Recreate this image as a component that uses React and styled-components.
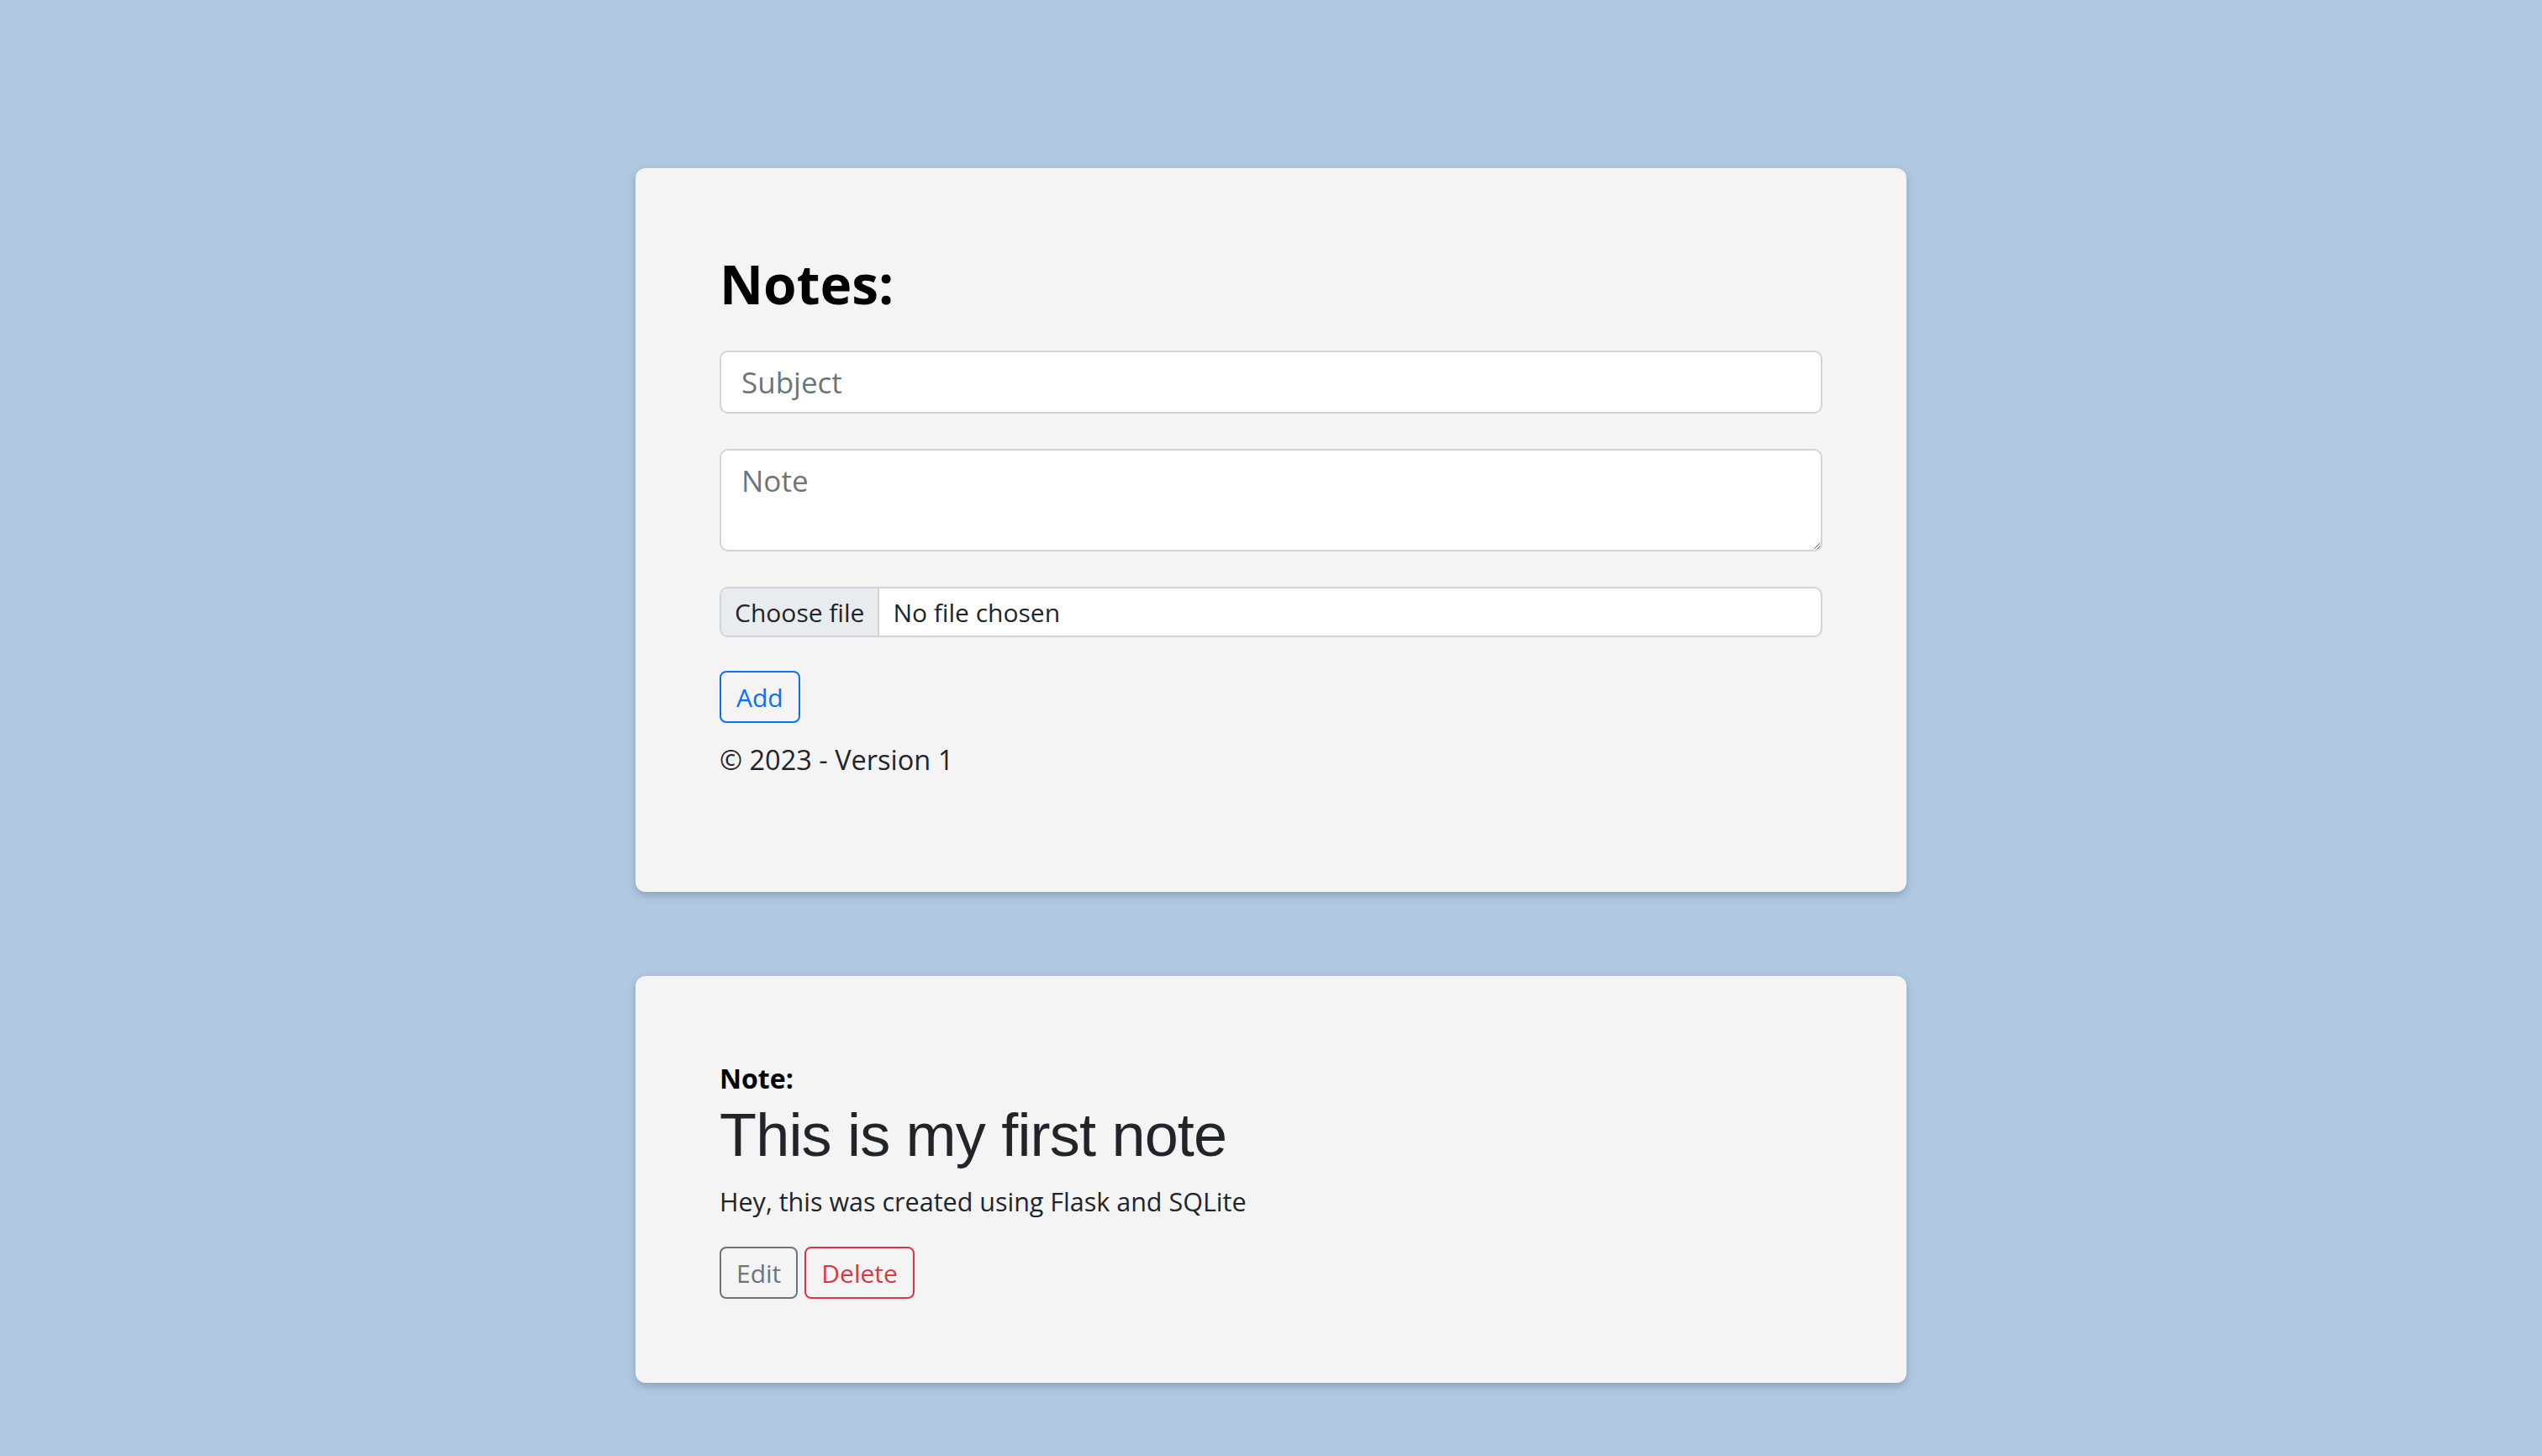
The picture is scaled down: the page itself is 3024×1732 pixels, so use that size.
import React from "react";
import styled, { createGlobalStyle } from "styled-components";

const GlobalStyle = createGlobalStyle`
  html, body {
    margin: 0;
    padding: 0;
    background: #b0c9e0;
  }
  body {
    font-family: "Open Sans", "Noto Sans", sans-serif;
    color: #212529;
  }
  * { box-sizing: border-box; }
`;

const Page = styled.main`
  display: flex;
  flex-direction: column;
  align-items: center;
  gap: 100px;
  padding: 200px 0 87px;
  min-height: 1732px;
`;

const Card = styled.section`
  width: 1512px;
  background: #f4f4f4;
  border-radius: 12px;
  box-shadow: 0 4px 10px rgba(40, 60, 90, 0.28);
  display: flex;
  flex-direction: column;
  padding: ${(p) => p.$pad};
`;

const Heading = styled.h1`
  margin: 0;
  font-size: 64px;
  line-height: 80px;
  font-weight: 700;
  color: #000;
`;

const Form = styled.form`
  display: flex;
  flex-direction: column;
  margin-top: 39px;
`;

const TextInput = styled.input`
  height: 75px;
  border: 2px solid #ced4da;
  border-radius: 10px;
  background: #fff;
  padding: 0 24px;
  font-family: "Open Sans", sans-serif;
  font-size: 35px;
  color: #212529;
  outline: none;
  &::placeholder { color: #6c757d; }
`;

const TextArea = styled.textarea`
  height: 122px;
  margin-top: 42px;
  border: 2px solid #ced4da;
  border-radius: 10px;
  background: #fff;
  padding: 12px 24px;
  font-family: "Open Sans", sans-serif;
  font-size: 35px;
  line-height: 48px;
  color: #212529;
  outline: none;
  resize: vertical;
  &::placeholder { color: #6c757d; }
`;

const FileField = styled.label`
  margin-top: 42px;
  height: 60px;
  display: flex;
  align-items: stretch;
  border: 2px solid #ced4da;
  border-radius: 10px;
  background: #fff;
  overflow: hidden;
  font-size: 30px;
  color: #212529;
  cursor: pointer;
`;

const HiddenFile = styled.input`
  display: none;
`;

const FileButton = styled.span`
  display: flex;
  align-items: center;
  padding: 0 16px;
  background: #e9ecef;
  border-right: 2px solid #ced4da;
`;

const FileName = styled.span`
  display: flex;
  align-items: center;
  padding: 0 16px;
`;

const Actions = styled.div`
  display: flex;
  gap: 8px;
  margin-top: ${(p) => p.$top};
`;

const OutlineButton = styled.button`
  height: 62px;
  padding: 0 18px;
  background: transparent;
  border: 2px solid ${(p) => p.$color};
  color: ${(p) => p.$color};
  border-radius: 8px;
  font-family: "Open Sans", sans-serif;
  font-size: 30px;
  cursor: pointer;
`;

const Footer = styled.p`
  margin: 20px 0 0;
  font-size: 32.5px;
  line-height: 48px;
`;

const Label = styled.h5`
  margin: 0;
  font-size: 32px;
  line-height: 40px;
  font-weight: 700;
  color: #000;
`;

const Title = styled.h2`
  margin: 5px 0 0;
  font-family: "Liberation Sans", Arial, sans-serif;
  font-size: 72px;
  line-height: 84px;
  font-weight: 400;
  letter-spacing: -0.8px;
  color: #212529;
`;

const Body = styled.p`
  margin: 15px 0 0;
  font-size: 30.5px;
  line-height: 44px;
`;

export default function App() {
  return (
    <>
      <GlobalStyle />
      <Page>
        <Card $pad="98px 100px 133px">
          <Heading>Notes:</Heading>
          <Form onSubmit={(e) => e.preventDefault()}>
            <TextInput type="text" placeholder="Subject" />
            <TextArea placeholder="Note" />
            <FileField>
              <HiddenFile type="file" />
              <FileButton>Choose file</FileButton>
              <FileName>No file chosen</FileName>
            </FileField>
            <Actions $top="40px">
              <OutlineButton type="submit" $color="#0d6efd">Add</OutlineButton>
            </Actions>
          </Form>
          <Footer>© 2023 - Version 1</Footer>
        </Card>
        <Card $pad="102px 100px 100px">
          <Label>Note:</Label>
          <Title>This is my first note</Title>
          <Body>Hey, this was created using Flask and SQLite</Body>
          <Actions $top="32px">
            <OutlineButton $color="#6c757d">Edit</OutlineButton>
            <OutlineButton $color="#dc3545">Delete</OutlineButton>
          </Actions>
        </Card>
      </Page>
    </>
  );
}
